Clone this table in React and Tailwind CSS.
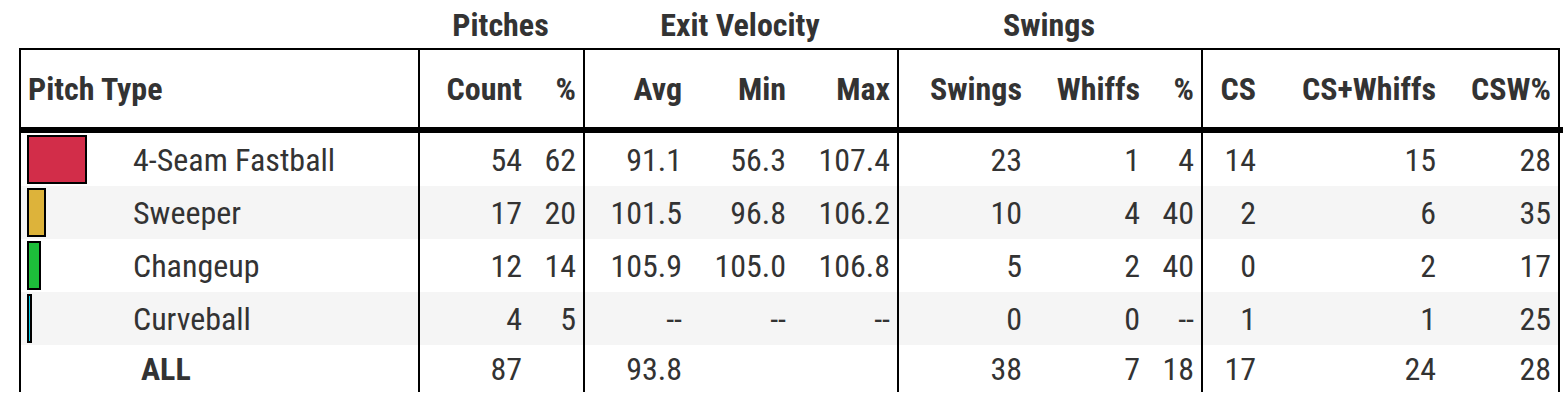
import React from "react";

const COLS =
  "grid w-[1541px] grid-cols-[399px_111px_54px_106px_104px_104px_132px_118px_54px_62px_180px_117px]";

const rows = [
  { name: "4-Seam Fastball", color: "#d22d49", count: "54", pct: 62, avg: "91.1", min: "56.3", max: "107.4", swings: "23", whiffs: "1", wp: "4", cs: "14", csw: "15", cswp: "28" },
  { name: "Sweeper", color: "#ddb33a", count: "17", pct: 20, avg: "101.5", min: "96.8", max: "106.2", swings: "10", whiffs: "4", wp: "40", cs: "2", csw: "6", cswp: "35" },
  { name: "Changeup", color: "#1dbe3a", count: "12", pct: 14, avg: "105.9", min: "105.0", max: "106.8", swings: "5", whiffs: "2", wp: "40", cs: "0", csw: "2", cswp: "17" },
  { name: "Curveball", color: "#00d1ed", count: "4", pct: 5, avg: "--", min: "--", max: "--", swings: "0", whiffs: "0", wp: "--", cs: "1", csw: "1", cswp: "25" },
];

const total = { count: "87", avg: "93.8", swings: "38", whiffs: "7", wp: "18", cs: "17", csw: "24", cswp: "28" };

function Num({ children, group = false, last = false }) {
  return (
    <div
      className={
        "flex items-center justify-end pr-[7px] border-black " +
        (group ? "border-l-2 " : "") +
        (last ? "border-r-2 " : "")
      }
    >
      {children}
    </div>
  );
}

function DataCells({ r }) {
  return (
    <>
      <Num group>{r.count}</Num>
      <Num>{r.pctText}</Num>
      <Num group>{r.avg}</Num>
      <Num>{r.min}</Num>
      <Num>{r.max}</Num>
      <Num group>{r.swings}</Num>
      <Num>{r.whiffs}</Num>
      <Num>{r.wp}</Num>
      <Num group>{r.cs}</Num>
      <Num>{r.csw}</Num>
      <Num last>{r.cswp}</Num>
    </>
  );
}

export default function App() {
  return (
    <div className="bg-white pl-[19px] font-['Roboto_Condensed',Roboto,sans-serif] text-[32px] leading-none text-[#333333]">
      {/* group headers */}
      <div className={COLS + " h-[48px] pt-[2px] font-bold"}>
        <div />
        <div className="col-span-2 flex items-center justify-center">Pitches</div>
        <div className="col-span-3 flex items-center justify-center">Exit Velocity</div>
        <div className="col-span-3 flex items-center justify-center">Swings</div>
        <div className="col-span-3" />
      </div>

      {/* column headers */}
      <div className={COLS + " h-[79px] border-t-2 border-black font-bold"}>
        <div className="flex items-center border-l-2 border-black pl-[7px]">Pitch Type</div>
        <Num group>Count</Num>
        <Num>%</Num>
        <Num group>Avg</Num>
        <Num>Min</Num>
        <Num>Max</Num>
        <Num group>Swings</Num>
        <Num>Whiffs</Num>
        <Num>%</Num>
        <Num group>CS</Num>
        <Num>CS+Whiffs</Num>
        <Num last>CSW%</Num>
      </div>

      <div className="h-[6px] bg-black" />

      {rows.map((r, i) => (
        <div key={r.name} className={COLS + " h-[53px] " + (i % 2 === 1 ? "bg-[#f5f5f5]" : "bg-white")}>
          <div className="flex items-center border-l-2 border-black pl-[6px]">
            <div className="flex w-[100px] items-center">
              <div
                className="h-[49px] border-2 border-black"
                style={{ width: `${Math.round(r.pct * 0.965)}px`, backgroundColor: r.color }}
              />
            </div>
            <span className="ml-[6px]">{r.name}</span>
          </div>
          <DataCells r={{ ...r, pctText: String(r.pct) }} />
        </div>
      ))}

      <div className={COLS + " h-[47px] bg-white"}>
        <div className="flex items-center border-l-2 border-black pl-[6px]">
          <div className="w-[100px]" />
          <span className="ml-[14px] font-bold">ALL</span>
        </div>
        <DataCells r={{ ...total, min: "", max: "", pctText: "" }} />
      </div>
    </div>
  );
}
